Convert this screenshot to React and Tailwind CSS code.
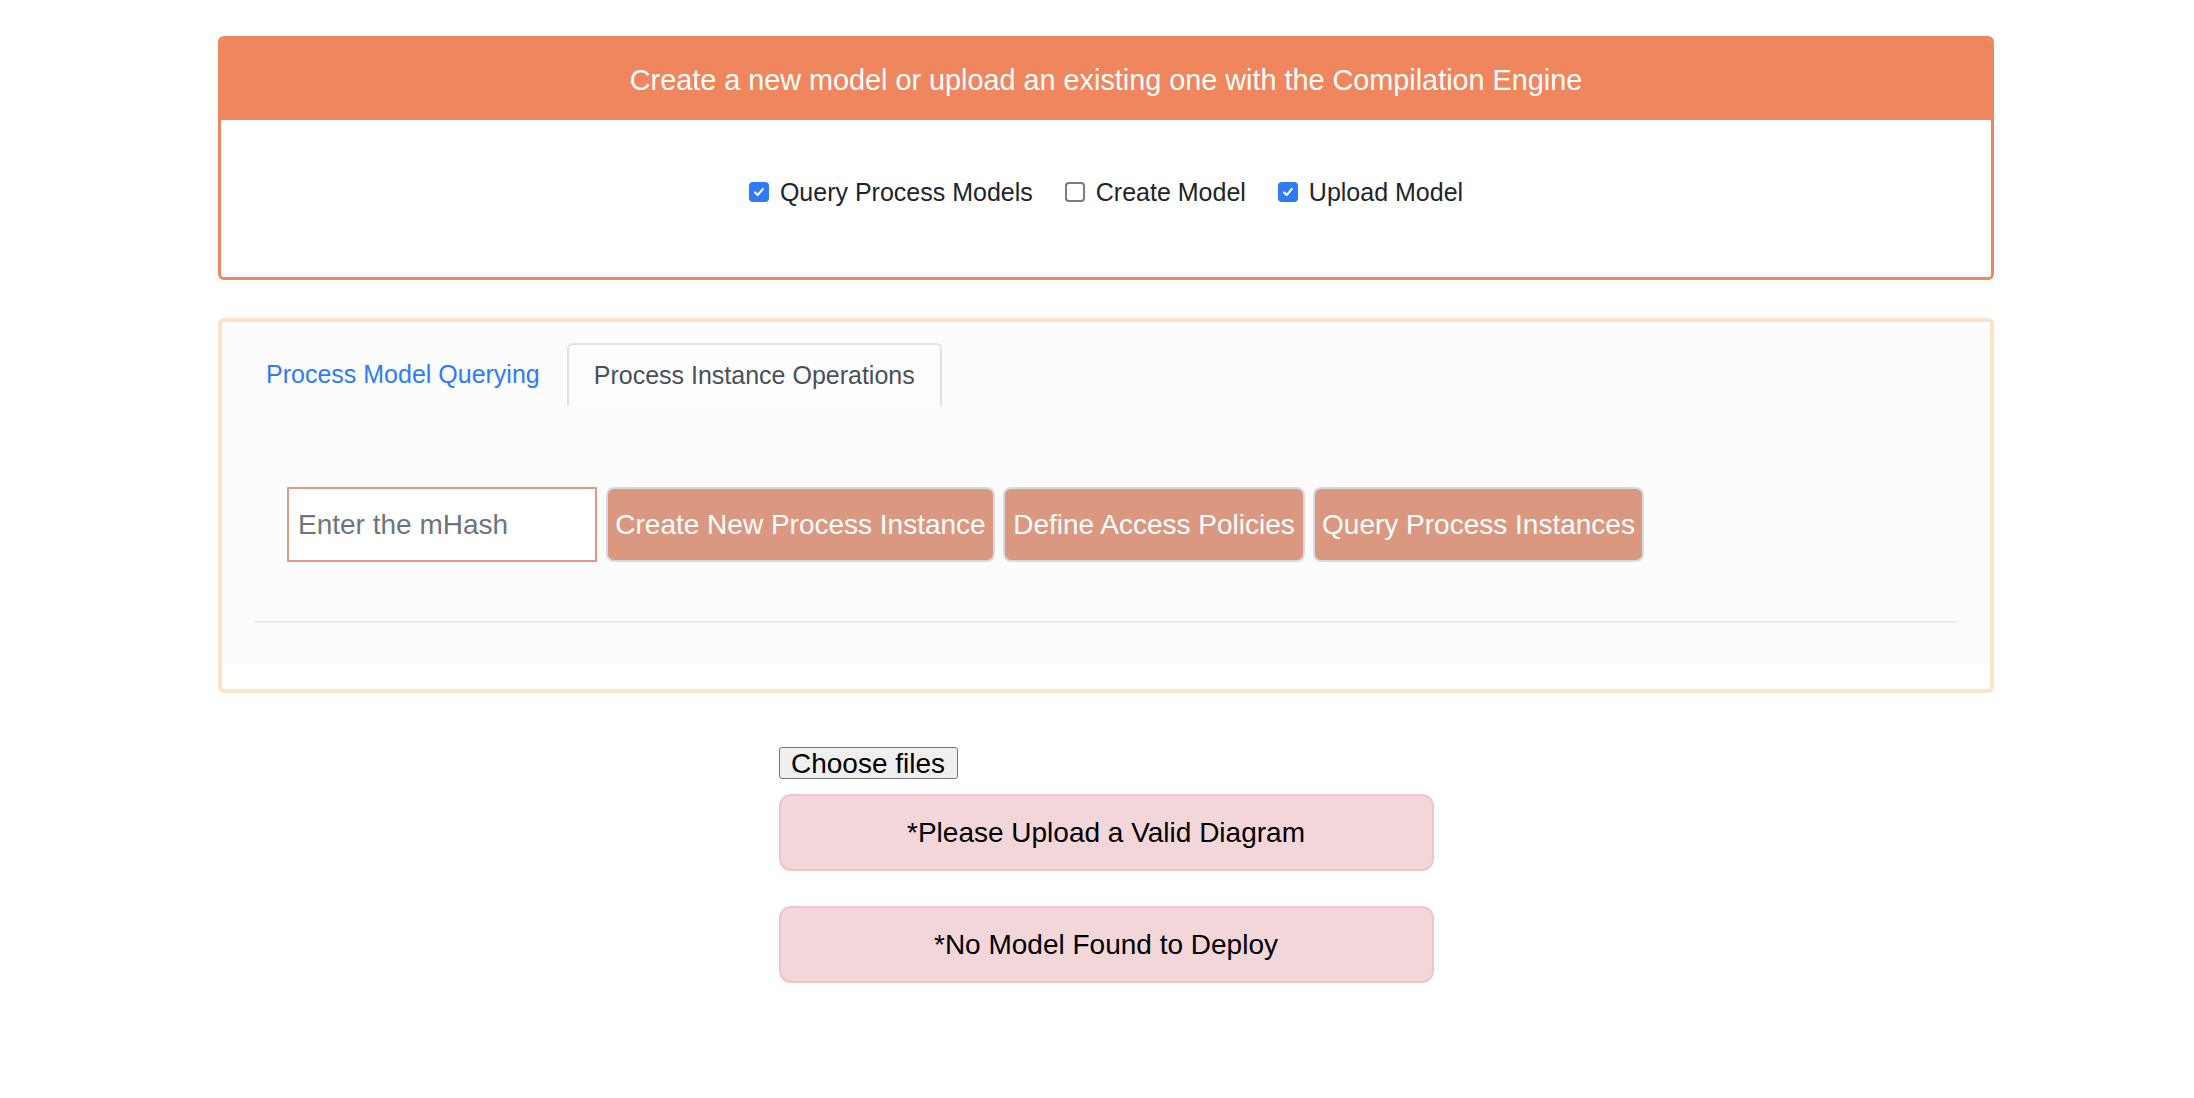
import React, { useState } from 'react';

const FONT = "font-['Liberation_Sans',Arial,sans-serif]";

// Little checkbox that looks like the macOS one in the screenshot
const Check = ({ checked, label, onToggle }) => (
  <label className="flex items-center gap-[11px] cursor-pointer" onClick={onToggle}>
    {checked ? (
      <span className="w-[20px] h-[20px] rounded-[4px] bg-[#2f7bf5] flex items-center justify-center">
        <svg width="14" height="14" viewBox="0 0 16 16" fill="none">
          <path d="M3.5 8.5l3 3 6-7" stroke="#fff" strokeWidth="2.4" strokeLinecap="round" strokeLinejoin="round" />
        </svg>
      </span>
    ) : (
      <span className="w-[20px] h-[20px] rounded-[4px] border-2 border-[#7a7a7a] bg-white" />
    )}
    <span className="text-[25px] text-[#212529] leading-none">{label}</span>
  </label>
);

const App = () => {
  const [options, setOptions] = useState({ query: true, create: false, upload: true });
  const [activeTab, setActiveTab] = useState('instance');
  const [mHash, setMHash] = useState('');

  const toggle = (key) => setOptions((prev) => ({ ...prev, [key]: !prev[key] }));

  return (
    <div className={`min-h-screen bg-white ${FONT}`}>
      <div className="ml-[218px] w-[1776px] pt-[36px]">
        {/* Top card */}
        <div className="rounded-[6px] border-[3px] border-[#ef865e] overflow-hidden">
          <div className="h-[81px] pt-[2px] bg-[#ef865e] flex items-center justify-center text-white text-[28.8px]">
            Create a new model or upload an existing one with the Compilation Engine
          </div>
          <div className="h-[157px] bg-white pt-[57px]">
            <div className="h-[30px] flex items-center justify-center gap-[32px]">
              <Check checked={options.query} label="Query Process Models" onToggle={() => toggle('query')} />
              <Check checked={options.create} label="Create Model" onToggle={() => toggle('create')} />
              <Check checked={options.upload} label="Upload Model" onToggle={() => toggle('upload')} />
            </div>
          </div>
        </div>

        {/* Process model card */}
        <div className="mt-[38px] rounded-[6px] border-4 border-[#fde3c5] bg-white">
          <div className="h-[343px] bg-[#fcfcfc] pt-[21px]">
            <div className="flex ml-[19px] gap-[2px]">
              <button
                className={`h-[63px] px-[25px] flex items-center text-[25px] ${
                  activeTab === 'model'
                    ? 'border-2 border-b-0 border-[#dee2e6] rounded-t-[6px] bg-[#fdfdfd] text-[#495057]'
                    : 'text-[#2f7bf5]'
                }`}
                onClick={() => setActiveTab('model')}
              >
                Process Model Querying
              </button>
              <button
                className={`h-[63px] px-[25px] flex items-center text-[25px] ${
                  activeTab === 'instance'
                    ? 'border-2 border-b-0 border-[#dee2e6] rounded-t-[6px] bg-[#fdfdfd] text-[#495057]'
                    : 'text-[#2f7bf5]'
                }`}
                onClick={() => setActiveTab('instance')}
              >
                Process Instance Operations
              </button>
            </div>

            {/* Instance actions */}
            <div className="mt-[81px] ml-[65px] flex items-center">
              <input
                type="text"
                value={mHash}
                onChange={(e) => setMHash(e.target.value)}
                placeholder="Enter the mHash"
                className="w-[310px] h-[75px] border-2 border-[#dc9a85] bg-white px-[9px] text-[28px] text-[#212529] placeholder:text-[#6c757d] outline-none"
              />
              <div className="ml-[9px] flex gap-[8px]">
                <button className="w-[389px] h-[75px] rounded-[8px] border-2 border-[#d5dbe6] bg-[#db9880] text-white text-[28px]">
                  Create New Process Instance
                </button>
                <button className="w-[302px] h-[75px] rounded-[8px] border-2 border-[#d5dbe6] bg-[#db9880] text-white text-[28px]">
                  Define Access Policies
                </button>
                <button className="w-[331px] h-[75px] rounded-[8px] border-2 border-[#d5dbe6] bg-[#db9880] text-white text-[28px]">
                  Query Process Instances
                </button>
              </div>
            </div>

            <div className="mt-[59px] ml-[32px] mr-[33px] h-[2px] bg-[#ebebf0]" />
          </div>
          <div className="h-[24px]" />
        </div>

        {/* Upload + messages */}
        <div className="mx-auto w-[655px] pt-[54px]">
          <button className="h-[32px] w-[179px] rounded-[3px] border border-[#767676] bg-[#efefef] text-[28px] text-black leading-none pt-[2px]">
            Choose files
          </button>
          <div className="mt-[14px] h-[77px] rounded-[12px] border-2 border-[#f0c3c7] bg-[#f3d6d9] flex items-center justify-center text-[28px] text-black">
            *Please Upload a Valid Diagram
          </div>
          <div className="mt-[35px] h-[77px] rounded-[12px] border-2 border-[#f0c3c7] bg-[#f3d6d9] flex items-center justify-center text-[28px] text-black">
            *No Model Found to Deploy
          </div>
        </div>
      </div>
    </div>
  );
};

export default App;
